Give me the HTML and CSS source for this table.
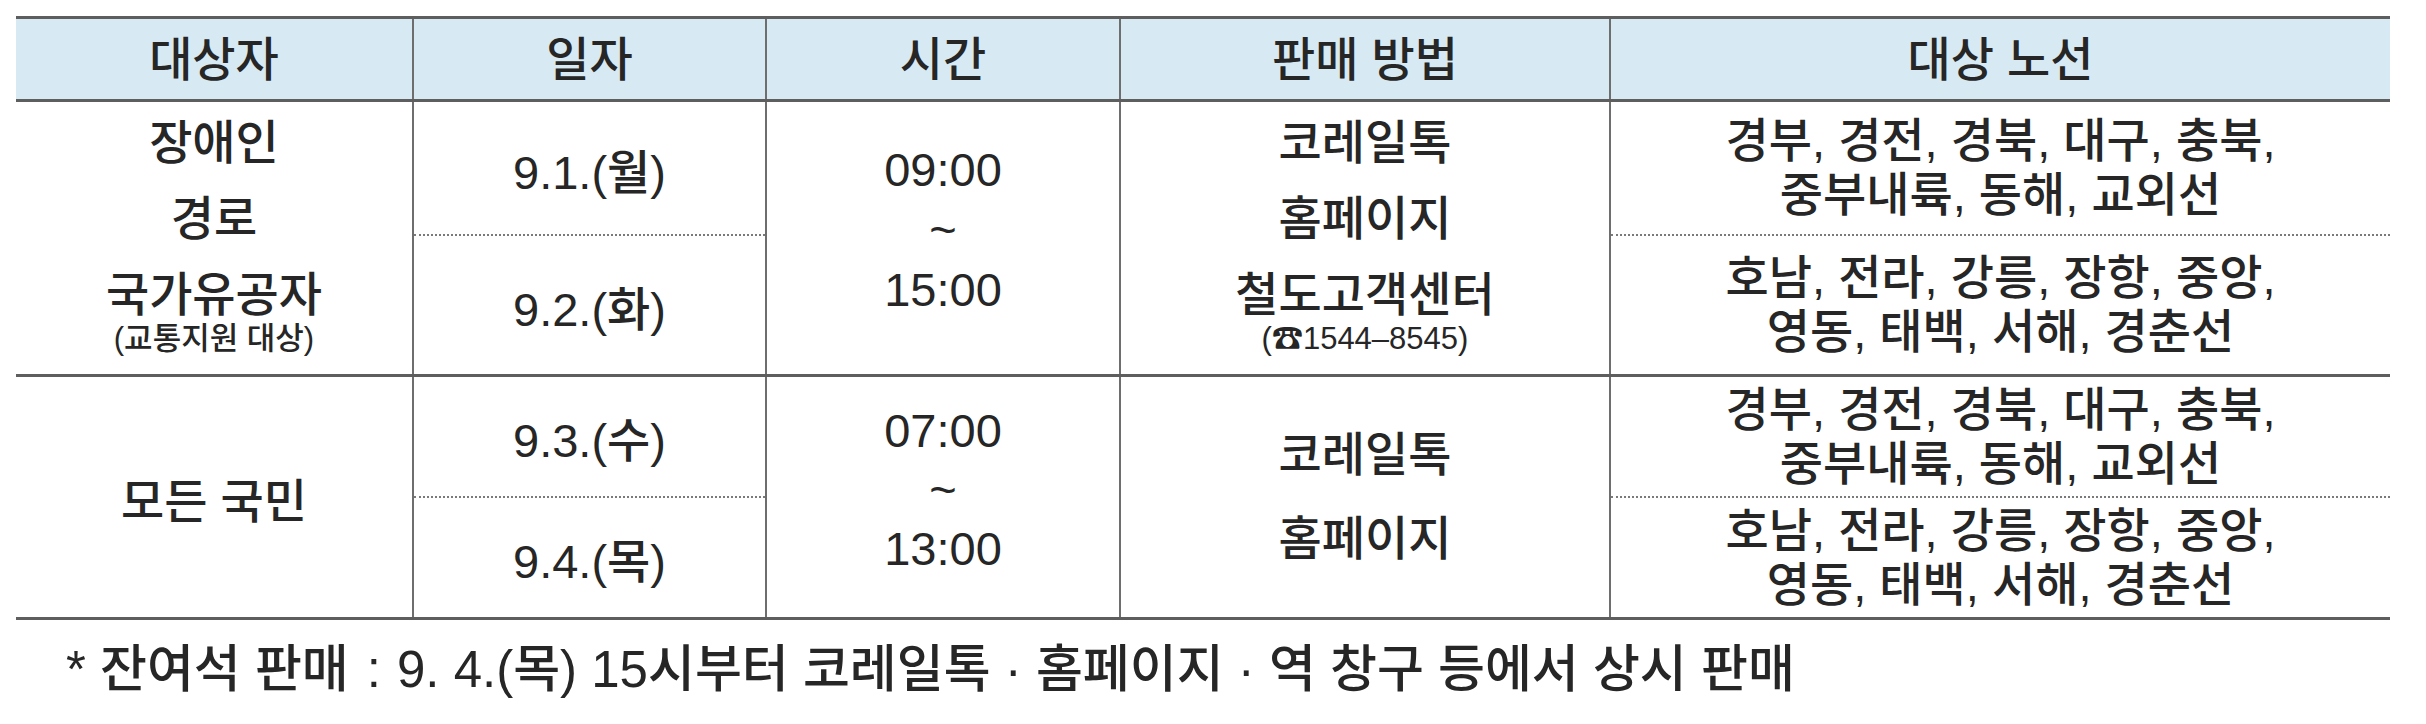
FILE: index.html
```html
<!DOCTYPE html>
<html lang="ko">
<head>
<meta charset="utf-8">
<title>판매 일정</title>
<link rel="stylesheet" href="styles.css">
</head>
<body>
<div class="page">
  <table class="sched">
    <colgroup>
      <col class="c1"><col class="c2"><col class="c3"><col class="c4"><col class="c5">
    </colgroup>
    <thead>
      <tr class="head">
        <th>대상자</th><th>일자</th><th>시간</th><th>판매 방법</th><th>대상 노선</th>
      </tr>
    </thead>
    <tbody class="grp">
      <tr class="g1a">
        <td rowspan="2" class="stack">
          <div class="ln">장애인</div>
          <div class="ln">경로</div>
          <div class="ln">국가유공자</div>
          <div class="sm">(교통지원 대상)</div>
        </td>
        <td class="date">9.1.(월)</td>
        <td rowspan="2" class="time t1">
          <div>09:00</div><div class="tl">~</div><div>15:00</div>
        </td>
        <td rowspan="2" class="stack">
          <div class="ln">코레일톡</div>
          <div class="ln">홈페이지</div>
          <div class="ln">철도고객센터</div>
          <div class="sm">(☎1544–8545)</div>
        </td>
        <td class="lines">
          <div>경부, 경전, 경북, 대구, 충북,</div>
          <div>중부내륙, 동해, 교외선</div>
        </td>
      </tr>
      <tr class="g1b">
        <td class="date dot">9.2.(화)</td>
        <td class="lines dot">
          <div>호남, 전라, 강릉, 장항, 중앙,</div>
          <div>영동, 태백, 서해, 경춘선</div>
        </td>
      </tr>
    </tbody>
    <tbody class="grp">
      <tr class="g2a">
        <td rowspan="2" class="all">모든 국민</td>
        <td class="date">9.3.(수)</td>
        <td rowspan="2" class="time t2">
          <div>07:00</div><div class="tl">~</div><div>13:00</div>
        </td>
        <td rowspan="2" class="web">
          <div>코레일톡</div>
          <div>홈페이지</div>
        </td>
        <td class="lines">
          <div>경부, 경전, 경북, 대구, 충북,</div>
          <div>중부내륙, 동해, 교외선</div>
        </td>
      </tr>
      <tr class="g2b">
        <td class="date dot">9.4.(목)</td>
        <td class="lines dot">
          <div>호남, 전라, 강릉, 장항, 중앙,</div>
          <div>영동, 태백, 서해, 경춘선</div>
        </td>
      </tr>
    </tbody>
  </table>
  <p class="note">* 잔여석 판매<span class="colon">:</span>9. 4.(목) 15시부터 코레일톡 · 홈페이지 · 역 창구 등에서 상시 판매</p>
</div>
</body>
</html>
```
FILE: styles.css
```css
html, body {
  margin: 0;
  padding: 0;
  background: #ffffff;
}

body {
  font-family: "Liberation Sans", "Noto Sans CJK KR", sans-serif;
  color: #262626;
}

.page {
  padding: 16px 0 0 16px;
}

.sched {
  width: 2374px;
  border-collapse: collapse;
  table-layout: fixed;
  font-size: 47px;
  font-weight: 500;
}

.c1 { width: 397px; }
.c2 { width: 353px; }
.c3 { width: 354px; }
.c4 { width: 490px; }
.c5 { width: 780px; }

.sched th,
.sched td {
  padding: 0;
  text-align: center;
  vertical-align: middle;
  border-left: 2px solid #6e6e6e;
  font-weight: 500;
}

.sched th:first-child,
.sched td:first-child {
  border-left: none;
}

.sched .g1b td,
.sched .g2b td {
  border-left: 2px solid #6e6e6e;
}

.head th {
  height: 80px;
  background: #d7e9f3;
  border-top: 3px solid #5e5e5e;
  border-bottom: 3px solid #5e5e5e;
  line-height: 1;
}

.grp {
  border-bottom: 3px solid #5e5e5e;
}

.g1a td { height: 132px; }
.g1b td { height: 138px; }
.g2a td { height: 119px; }
.g2b td { height: 119px; }

.dot {
  border-top: 2px dotted #7a7a7a;
}

.stack {
  padding-bottom: 16px !important;
}

.stack .ln {
  line-height: 76px;
}

.stack .sm {
  font-size: 31px;
  line-height: 32px;
  margin-top: -10px;
}

.time {
  padding-bottom: 16px !important;
}

.t1 div { line-height: 60px; }
.t2 div { line-height: 59px; }

.lines div {
  line-height: 54px;
}

.web div {
  line-height: 84px;
}

.note {
  margin: 20px 0 0 50px;
  font-size: 51px;
  font-weight: 500;
  line-height: 60px;
}

.colon {
  padding: 0 16px 0 18px;
}
```
